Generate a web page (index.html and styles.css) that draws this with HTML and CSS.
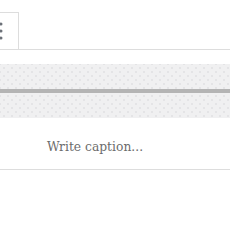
FILE: index.html
```html
<!DOCTYPE html>
<html lang="en">
<head>
    <meta charset="UTF-8">
    <title>Separator block</title>
    <link rel="stylesheet" href="styles.css">
</head>
<body>
    <div class="toolbar">
        <div class="toolbar-group">
            <button class="more-btn" aria-label="More options">
                <svg width="4" height="18" viewBox="0 0 4 18">
                    <circle cx="2" cy="2" r="1.5"/>
                    <circle cx="2" cy="9" r="1.5"/>
                    <circle cx="2" cy="16" r="1.5"/>
                </svg>
            </button>
        </div>
    </div>

    <div class="block">
        <div class="placeholder">
            <hr class="separator">
        </div>
    </div>

    <div class="caption">Write caption...</div>
</body>
</html>
```

FILE: styles.css
```css
body {
    margin: 0;
    padding: 0;
    background: #fff;
    font-family: 'DejaVu Serif', 'Liberation Serif', serif;
    overflow: hidden;
}

.toolbar {
    margin-top: 12px;
    height: 37px;
    border-bottom: 1px solid #dddddd;
    display: flex;
}

.toolbar-group {
    width: 30px;
    margin-left: -12px;
    border-top: 1px solid #dddddd;
    border-right: 1px solid #dddddd;
    display: flex;
    align-items: center;
}

.more-btn {
    border: none;
    background: none;
    padding: 0;
    margin-left: 11px;
    display: flex;
    fill: #6c7178;
}

.block {
    margin-top: 14px;
}

.placeholder {
    height: 54px;
    background-color: #f0f0f1;
    background-image:
        radial-gradient(#e4e4e6 0.8px, transparent 1px),
        radial-gradient(#e4e4e6 0.8px, transparent 1px);
    background-size: 8px 8px;
    background-position: 0 0, 4px 4px;
    display: flex;
    flex-direction: column;
    justify-content: center;
}

.separator {
    margin: 0;
    border: none;
    height: 4px;
    background: #b4b4b4;
}

.caption {
    margin-top: 21px;
    padding-left: 47px;
    height: 30px;
    font-size: 12.3px;
    line-height: 17px;
    color: #6c6c6c;
    border-bottom: 1px solid #dddddd;
}
```
